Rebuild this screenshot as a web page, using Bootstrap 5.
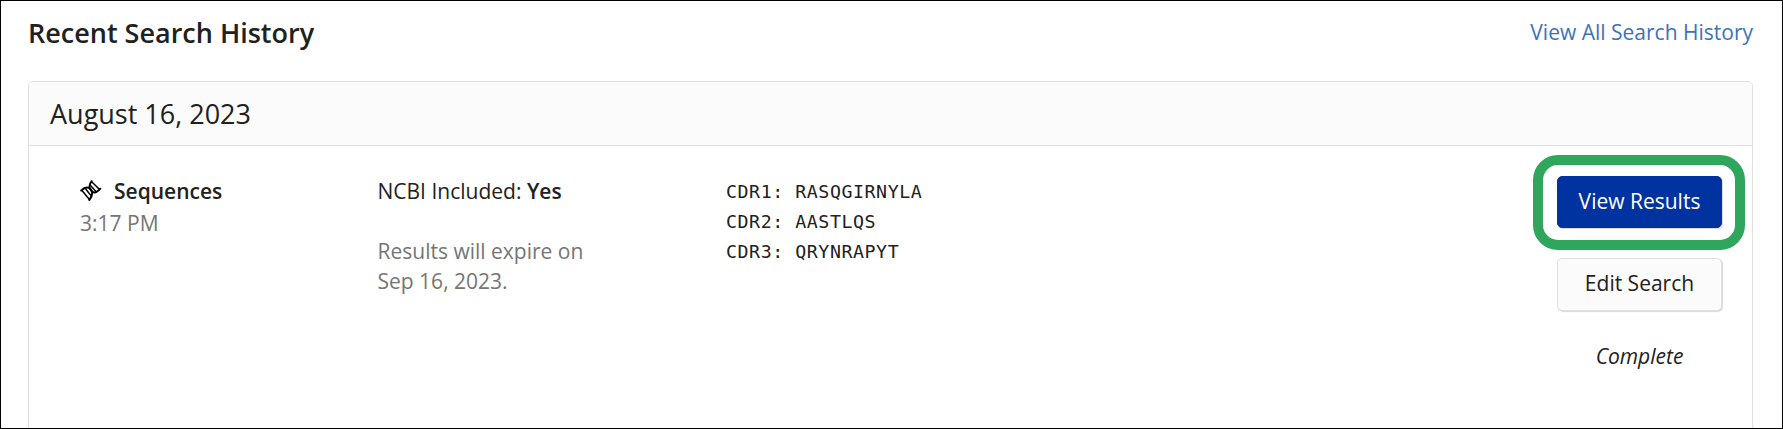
<!DOCTYPE html>
<html lang="en">
<head>
<meta charset="utf-8">
<meta name="viewport" content="width=device-width, initial-scale=1">
<title>Recent Search History</title>
<link href="https://cdn.jsdelivr.net/npm/bootstrap@5.3.0/dist/css/bootstrap.min.css" rel="stylesheet">
<style>
  body { font: 400 21px/30px "Open Sans", sans-serif; color: #212121; background: #fff; }
  .page-frame { height: 429px; border: 1px solid #000; padding: 0 29px 0 27px; }
  .page-head { height: 80px; padding-top: 12px; }
  .page-head h1 { font-size: 27px; line-height: 39px; font-weight: 600; }
  .page-head a { color: #3b73b9; line-height: 38px; }
  .history-card { height: 400px; border: 1px solid #e0e0e0; border-radius: 5px; }
  .history-card .card-header { height: 64px; padding: 0 21px; font-size: 27px; line-height: 63px; background: #fbfbfb; border-bottom: 1px solid #e0e0e0; border-radius: 4px 4px 0 0; }
  .history-row { padding: 30px 30px 0 51px; }
  .col-kind { width: 297.5px; }
  .col-info { width: 348.5px; }
  .muted-text { color: #757575; }
  .kind-time { margin-top: 2px; }
  .kind-icon { width: 22px; height: 22px; margin-right: 12px; }
  .sequence-list { font-family: "DejaVu Sans Mono", monospace; font-size: 18.3px; letter-spacing: .54px; padding-top: 1px; margin: 0; overflow: visible; color: #212121; }
  .col-actions { width: 165px; }
  .col-actions .btn { padding: 0; font-size: 21px; border-radius: 5px; box-shadow: 1px 1px 1px rgba(0,0,0,.15); }
  .col-actions .btn-results { height: 52px; line-height: 48px; padding-bottom: 2px; color: #fff; background: #0033a0; border-color: #0033a0; }
  .col-actions .btn-edit { height: 53px; line-height: 48px; padding-bottom: 3px; color: #212121; background: #fbfbfb; border-color: #e0e0e0; margin-top: 30px; }
  .callout-ring { position: absolute; inset: -21px -23px -22px -24px; border: 10px solid #2fa65c; border-radius: 25px; pointer-events: none; }
  .status-text { margin-top: 30px; }
</style>
</head>
<body>
<main class="page-frame overflow-hidden">
  <header class="page-head d-flex justify-content-between align-items-start">
    <h1 class="m-0">Recent Search History</h1>
    <a href="#" class="text-decoration-none">View All Search History</a>
  </header>
  <section class="card history-card">
    <div class="card-header">August 16, 2023</div>
    <div class="history-row d-flex align-items-start">
      <div class="col-kind flex-shrink-0">
        <div class="d-flex align-items-center fw-semibold">
          <svg class="kind-icon" viewBox="0 0 22 22" fill="none" stroke="#000" stroke-width="2" stroke-linecap="round" stroke-linejoin="round" aria-hidden="true">
            <path d="M1.200 10.500C4.500 7.500 8 6.500 10.700 9.300L12 11.500C12.500 14.500 11.500 17.500 9.300 20"/>
            <path d="M11.700 1.200C9.500 3.800 9 6.500 10 9L12 11.500C14.500 13.500 17.500 12 20.300 8.700"/>
            <path d="M2.200 10.800L9.200 19.200M5.900 9.300L11.300 16M12.200 2.200L19.300 9.300M10.300 5.200L16 11.600" stroke-width="1.500"/>
          </svg>
          <span>Sequences</span>
        </div>
        <div class="muted-text kind-time">3:17 PM</div>
      </div>
      <div class="col-info flex-shrink-0">
        <div>NCBI Included: <span class="fw-semibold">Yes</span></div>
        <div class="muted-text">
          <br>Results will expire on<br>Sep 16, 2023.
        </div>
      </div>
      <pre class="sequence-list">CDR1: RASQGIRNYLA
CDR2: AASTLQS
CDR3: QRYNRAPYT</pre>
      <div class="col-actions ms-auto text-center d-flex flex-column">
        <div class="position-relative">
          <button type="button" class="btn btn-results w-100 d-block">View Results</button>
          <span class="callout-ring"></span>
        </div>
        <button type="button" class="btn btn-edit w-100">Edit Search</button>
        <em class="status-text">Complete</em>
      </div>
    </div>
  </section>
</main>
<script src="https://cdn.jsdelivr.net/npm/bootstrap@5.3.0/dist/js/bootstrap.bundle.min.js"></script>
</body>
</html>
